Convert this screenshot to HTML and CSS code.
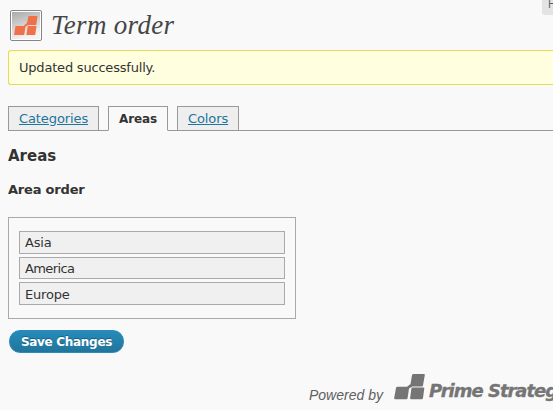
FILE: index.html
```html
<!DOCTYPE html>
<html lang="en">
<head>
<meta charset="utf-8">
<title>Term order</title>
<link rel="stylesheet" href="styles.css">
</head>
<body>
<div class="help">H</div>
<main class="wrap">
  <header class="title">
    <svg class="icon" width="32" height="31" viewBox="0 0 32 31">
      <defs><linearGradient id="g" x1="0" y1="0" x2="0.35" y2="1"><stop offset="0" stop-color="#aaa"/><stop offset="1" stop-color="#f4f4f4"/></linearGradient></defs>
      <rect x=".5" y=".5" width="31" height="30" rx="1.5" fill="#fff" stroke="#858585"/>
      <rect x="2" y="2" width="28" height="27" fill="url(#g)"/>
      <path d="M18.500 6h9l-1.200 9h-8l-2.800 1.500-1.300 8.500H4l1.500-9h8l3.500-3zM17.800 16h8.700l-1.300 9h-8.900z" fill="#f07048"/>
    </svg>
    <h1>Term order</h1>
  </header>
  <div class="notice">Updated successfully.</div>
  <nav class="tabs">
    <a class="tab cat" href="#">Categories</a>
    <a class="tab active" href="#">Areas</a>
    <a class="tab col" href="#">Colors</a>
  </nav>
  <h2>Areas</h2>
  <h3>Area order</h3>
  <ul class="terms">
    <li class="first">Asia</li>
    <li class="middle">America</li>
    <li class="last">Europe</li>
  </ul>
  <button class="save">Save Changes</button>
  <footer class="credit">
    <span class="powered">Powered by</span>
    <svg class="mark" width="31" height="26" viewBox="0 0 31 26"><path d="M19.500 0H30q1 0 .8 1L29 11.500q-.2 1-1.200 1H18.500l-3.500 2-1.400 9.500q-.2 1.300-1.300 1.300H1.200q-1.200 0-1-1.200L2 14q.2-1.200 1.300-1.200H13l3.500-2.800L18 1.200Q18.200 0 19.500 0zM18.500 13.500H29.500q1 0 .8 1L29 24q-.2 1.300-1.300 1.300H17q-1 0-.9-1l1.300-9.700q.1-1.100 1.100-1.100z" fill="#757575"/></svg>
    <span class="brand">Prime Strateg</span>
  </footer>
</main>
</body>
</html>
```
FILE: styles.css
```css
* { box-sizing: border-box; }
html { height: 410px; overflow: hidden; }
body {
  margin: 0;
  height: 410px;
  overflow: hidden;
  background: #f9f9f9;
  color: #333;
  font: 13px/16px Verdana, "DejaVu Sans", sans-serif;
}
.help {
  position: absolute;
  top: 0;
  right: 0;
  width: 11px;
  height: 15px;
  padding-left: 6px;
  overflow: hidden;
  border-radius: 0 0 0 3px;
  background: #e3e3e3;
  color: #606060;
  font-size: 10px;
  line-height: 9px;
}
.wrap { padding: 10px 0 0 8px; }
.title { display: flex; height: 40px; padding-left: 2px; }
.title h1 {
  margin: 0 0 0 9px;
  color: #464646;
  font: italic 27px/30px Georgia, "Liberation Serif", serif;
  letter-spacing: .3px;
}
.notice {
  height: 35px;
  padding: 9px 10px;
  border: 1px solid #e6db55;
  border-right: 0;
  border-radius: 3px 0 0 3px;
  background: #ffffe0;
  letter-spacing: -.2px;
}
.tabs {
  display: flex;
  gap: 9px;
  height: 25px;
  margin: 21px 0 0;
  border-bottom: 1px solid #999;
}
.tab {
  height: 25px;
  padding: 4px 0 0 10px;
  border: 1px solid #999;
  background: #eee;
  color: #21759b;
  letter-spacing: -.1px;
}
.cat { width: 91px; }
.col { width: 62px; }
.active {
  width: 60px;
  border-bottom-color: #f9f9f9;
  background: #f9f9f9;
  color: #333;
  font-size: 12px;
  font-weight: bold;
  text-decoration: none;
}
h2 { margin: 16px 0 0; font-size: 15px; line-height: 18px; }
h3 { margin: 17px 0 0; font-size: 13px; line-height: 16px; letter-spacing: -.2px; }
.terms {
  display: flex;
  flex-direction: column;
  gap: 3px;
  width: 288px;
  height: 102px;
  margin: 19px 0 0;
  padding: 13px 10px;
  border: 1px solid #aaa;
  list-style: none;
}
.terms li {
  height: 22px;
  padding: 3px 5px;
  border: 1px solid #aaa;
  background: #f0f0f0;
  letter-spacing: -.2px;
}
.terms .first, .terms .last { height: 23px; }
.terms .middle { letter-spacing: -.6px; }
.terms .last { padding-top: 4px; }
.save {
  display: block;
  width: 115px;
  height: 23px;
  margin: 11px 0 0 1px;
  padding: 0;
  border: 1px solid #298cba;
  border-radius: 11px;
  background: linear-gradient(#268bbb, #21759b);
  color: #fff;
  font: bold 12px/20px Verdana, "DejaVu Sans", sans-serif;
  letter-spacing: -.3px;
  text-shadow: 0 -1px 0 rgba(0, 0, 0, .3);
}
.credit {
  display: flex;
  margin-top: 21px;
  padding-left: 301px;
  color: #757575;
  font-style: italic;
  white-space: nowrap;
}
.powered { flex: none; width: 85px; padding-top: 13px; font: italic 14px/16px "Liberation Sans", sans-serif; color: #606060; }
.mark { flex: none; }
.brand {
  flex: 1;
  min-width: 0;
  height: 26px;
  margin: 6px 0 0 4px;
  overflow: hidden;
  font: italic bold 18px/22px "DejaVu Sans", sans-serif;
  letter-spacing: -1px;
  -webkit-text-stroke: .3px #757575;
}
```
